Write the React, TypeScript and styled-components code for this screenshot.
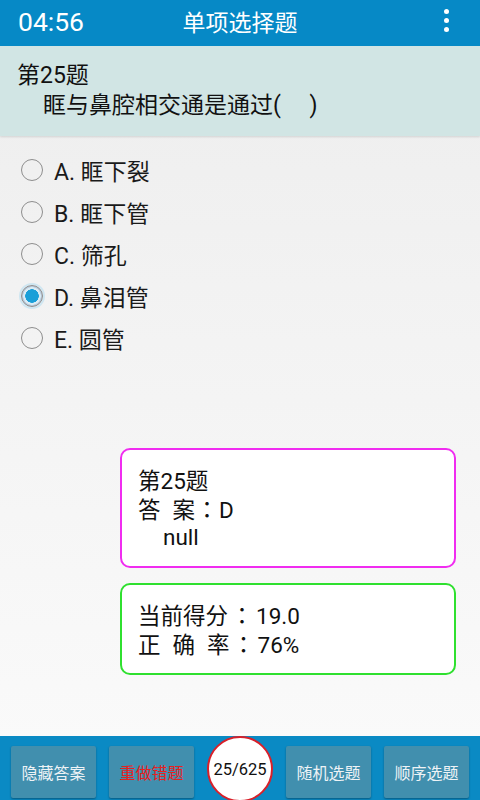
import { styled, createGlobalStyle } from 'styled-components';

const GlobalStyle = createGlobalStyle`
    html, body {
        margin: 0;
        padding: 0;
    }
    body {
        font-family: Roboto, "Noto Sans CJK SC", sans-serif;
    }
`;

const options = [
    { key: 'A', text: '眶下裂' },
    { key: 'B', text: '眶下管' },
    { key: 'C', text: '筛孔' },
    { key: 'D', text: '鼻泪管' },
    { key: 'E', text: '圆管' },
];

const App = () => {
    return (
        <>
            <GlobalStyle />
            <Page>
                <Header>
                    <Clock>04:56</Clock>
                    <Title>单项选择题</Title>
                    <Menu>
                        <Dot />
                        <Dot />
                        <Dot />
                    </Menu>
                </Header>
                <Question>
                    <div>第25题</div>
                    <QText>眶与鼻腔相交通是通过(&nbsp;&nbsp;&nbsp;&nbsp;&nbsp;)</QText>
                </Question>
                <Body>
                    <Options>
                        {options.map((o) => (
                            <Option key={o.key}>
                                <Radio $checked={o.key === 'D'} />
                                <span>
                                    {o.key}. {o.text}
                                </span>
                            </Option>
                        ))}
                    </Options>
                    <Cards>
                        <Card $color="#f02cf0">
                            <Line>第25题</Line>
                            <Line>
                                答<Gap />案<Colon>：</Colon>D
                            </Line>
                            <Line $indent>null</Line>
                        </Card>
                        <Card $color="#2fe02f" $pad="16px 16px 14px">
                            <Line>
                                当前得分<Colon $wide>：</Colon>19.0
                            </Line>
                            <Line>
                                正<Gap />确<Gap />率<Colon $wide>：</Colon>76%
                            </Line>
                        </Card>
                    </Cards>
                </Body>
                <Footer>
                    <FootButton>隐藏答案</FootButton>
                    <FootButton $red>重做错题</FootButton>
                    <Counter>25/625</Counter>
                    <FootButton>随机选题</FootButton>
                    <FootButton>顺序选题</FootButton>
                </Footer>
            </Page>
        </>
    );
};

export default App;

const Page = styled.div`
    width: 480px;
    height: 800px;
    display: flex;
    flex-direction: column;
    overflow: hidden;
    background: linear-gradient(#ededed, #fbfbfb);
`;

const Header = styled.div`
    height: 46px;
    flex-shrink: 0;
    background-color: #0689c6;
    display: flex;
    align-items: center;
    position: relative;
    color: #fff;
`;

const Clock = styled.div`
    font-family: Roboto, sans-serif;
    font-size: 26.5px;
    margin-left: 18px;
    margin-top: -3px;
`;

const Title = styled.div`
    position: absolute;
    left: 0;
    right: 0;
    text-align: center;
    font-size: 23px;
    margin-top: -4px;
    pointer-events: none;
`;

const Menu = styled.div`
    margin-left: auto;
    margin-right: 31px;
    display: flex;
    flex-direction: column;
    gap: 4px;
    margin-top: -6px;
`;

const Dot = styled.span`
    width: 5px;
    height: 5px;
    border-radius: 50%;
    background: #fff;
`;

const Question = styled.div`
    height: 90px;
    flex-shrink: 0;
    background-color: #d1e5e4;
    box-shadow: 0 1px 2px rgba(0, 0, 0, 0.12);
    padding: 15px 0 0 17px;
    box-sizing: border-box;
    color: #111;
    font-size: 23px;
    line-height: 30px;
`;

const QText = styled.div`
    padding-left: 26px;
`;

const Body = styled.div`
    flex: 1;
    display: flex;
    flex-direction: column;
`;

const Options = styled.div`
    padding: 13px 0 0 21px;
    display: flex;
    flex-direction: column;
`;

const Option = styled.div`
    height: 42px;
    display: flex;
    align-items: center;
    gap: 11px;
    font-size: 23px;
    color: #1a1a1a;
`;

const Radio = styled.span<{ $checked?: boolean }>`
    width: 22px;
    height: 22px;
    flex-shrink: 0;
    border-radius: 50%;
    border: 1.5px solid #8e8e8e;
    box-sizing: border-box;
    background: ${({ $checked }) =>
        $checked
            ? 'radial-gradient(circle, #1a9fd8 0 6.5px, #dcecf4 7px 8.5px, #bcd 9px)'
            : 'transparent'};
    ${({ $checked }) => $checked && 'box-shadow: 0 0 0 2px #cfe6f1;'}
`;

const Cards = styled.div`
    margin: 89px 24px 0 120px;
    display: flex;
    flex-direction: column;
    gap: 15px;
`;

const Card = styled.div<{ $color: string; $pad?: string }>`
    border: 2px solid ${({ $color }) => $color};
    border-radius: 10px;
    background: #fff;
    padding: ${({ $pad }) => $pad ?? '18px 16px 15px'};
    font-size: 22.5px;
    line-height: 27px;
    color: #111;
`;

const Line = styled.div<{ $indent?: boolean }>`
    white-space: nowrap;
    padding-left: ${({ $indent }) => ($indent ? '25px' : '0')};
`;

const Gap = styled.span`
    display: inline-block;
    width: 12px;
`;

const Colon = styled.span<{ $wide?: boolean }>`
    display: inline-block;
    width: ${({ $wide }) => ($wide ? '28px' : '24px')};
    text-align: center;
    font-family: "Noto Sans CJK TC", sans-serif;
`;

const Footer = styled.div`
    height: 64px;
    flex-shrink: 0;
    background-color: #0a8ac4;
    display: flex;
    align-items: center;
    justify-content: space-between;
    padding: 0 11px;
    box-sizing: border-box;
`;

const FootButton = styled.button<{ $red?: boolean }>`
    width: 85px;
    height: 52px;
    margin-top: 7px;
    border: none;
    border-radius: 2px;
    background-color: #418fae;
    box-shadow: 0 1px 2px rgba(0, 0, 0, 0.35);
    color: ${({ $red }) => ($red ? '#e8201e' : '#eef3f6')};
    font-family: Roboto, "Noto Sans CJK SC", sans-serif;
    font-size: 16px;
    padding: 0;
`;

const Counter = styled.div`
    width: 62px;
    height: 62px;
    margin-top: 2px;
    border-radius: 50%;
    border: 2px solid #d8202a;
    background: #fff;
    display: flex;
    align-items: center;
    justify-content: center;
    font-size: 16.5px;
    color: #111;
`;
